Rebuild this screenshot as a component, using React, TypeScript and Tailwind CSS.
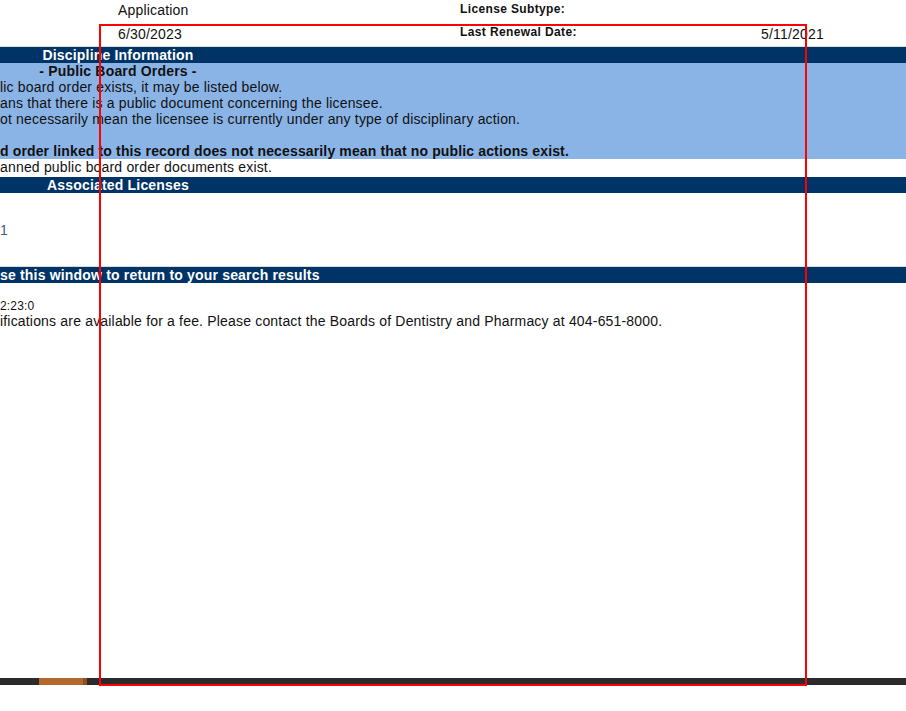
import React from 'react';

const navy = 'bg-[#003366] text-white font-bold h-[16px] whitespace-nowrap';

export default function App() {
  return (
    <div className="relative w-[906px] h-[711px] overflow-hidden bg-white flex flex-col font-['Liberation_Sans',Arial,sans-serif] text-[14px] leading-[16px] tracking-[0.18px] text-[#111]">
      {/* license summary rows */}
      <div className="flex h-[24px] whitespace-nowrap">
        <div className="w-[460px] pl-[118px] pt-[2px]">Application</div>
        <div className="pt-[2px] text-[12px] leading-[14px] font-bold tracking-[0.36px]">License Subtype:</div>
      </div>
      <div className="flex h-[22px] whitespace-nowrap border-b border-[#dcdcdc] box-content">
        <div className="w-[460px] pl-[118px] pt-[2px]">6/30/2023</div>
        <div className="w-[301px] pt-[1px] text-[12px] leading-[14px] font-bold tracking-[0.38px]">Last Renewal Date:</div>
        <div className="pt-[2px]">5/11/2021</div>
      </div>

      {/* discipline */}
      <div className={navy}>
        <div className="w-[236px] text-center">Discipline Information</div>
      </div>
      <div className="bg-[#8ab4e6] h-[96px] whitespace-nowrap">
        <div className="w-[236px] text-center font-bold">- Public Board Orders -</div>
        <div>lic board order exists, it may be listed below.</div>
        <div>ans that there is a public document concerning the licensee.</div>
        <div>ot necessarily mean the licensee is currently under any type of disciplinary action.</div>
        <div className="h-[16px]" />
        <div className="font-bold tracking-[0.14px]">d order linked to this record does not necessarily mean that no public actions exist.</div>
      </div>
      <div className="h-[18px] whitespace-nowrap">anned public board order documents exist.</div>

      {/* associated licenses */}
      <div className={navy}>
        <div className="w-[236px] text-center">Associated Licenses</div>
      </div>
      <div className="h-[74px] pt-[29px] border-b border-[#dcdcdc]">
        <span className="text-[#44558c]">1</span>
      </div>

      <div className={navy}>se this window to return to your search results</div>
      <div className="h-[16px]" />
      <div className="text-[12px] leading-[14px] whitespace-nowrap">2:23:0</div>
      <div className="whitespace-nowrap">
        ifications are available for a fee. Please contact the Boards of Dentistry and Pharmacy at 404-651-8000.
      </div>

      {/* scrollbar */}
      <div className="mt-auto h-[7px] bg-[#2b2b2b] flex">
        <div className="ml-[39px] w-[44px] bg-[#b3692e]" />
        <div className="w-[4px] bg-[#8c5226]" />
      </div>
      <div className="h-[26px]" />

      <div className="absolute left-[99px] top-[24px] w-[708px] h-[662px] border-2 border-[#ff0000] pointer-events-none" />
    </div>
  );
}
